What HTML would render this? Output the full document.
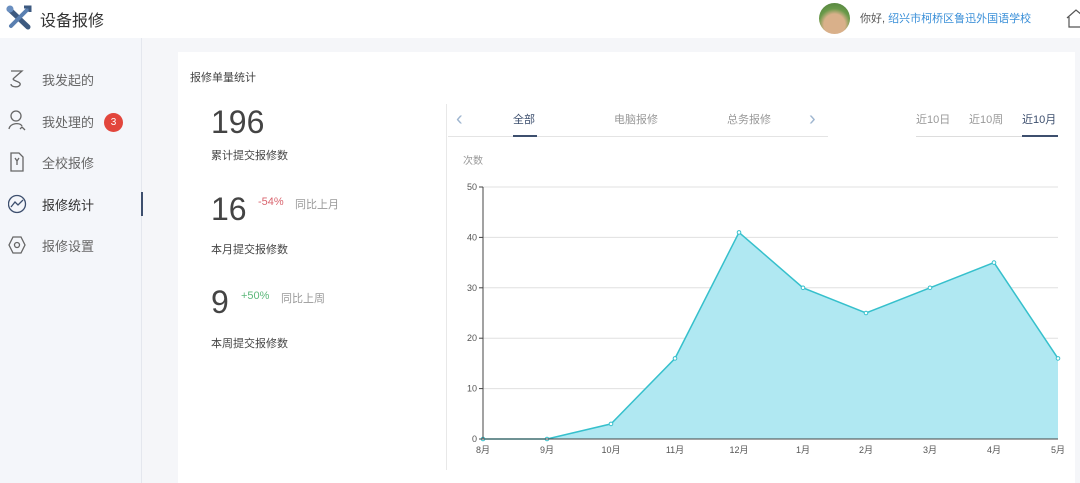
<!DOCTYPE html>
<html><head><meta charset="utf-8"><style>
*{margin:0;padding:0;box-sizing:border-box}
body{width:1080px;height:483px;overflow:hidden;background:#f5f6f9;font-family:"Liberation Sans","Noto Sans CJK SC",sans-serif;color:#333;position:relative}
.a{position:absolute;white-space:nowrap}
.top{left:0;top:0;width:1080px;height:38px;background:#fff}
.side{left:0;top:38px;width:142px;height:445px;background:#f4f6fa;border-right:1px solid #e4e7ee}
.nav{font-size:13px;color:#666}
.card{left:178px;top:52px;width:897px;height:431px;background:#fff}
</style></head><body>
<div class="a top"></div>
<svg class="a" style="left:6px;top:5px" width="28" height="26" viewBox="0 0 28 26"><path d="M3 4 L22 22" stroke="#3d5a80" stroke-width="5" stroke-linecap="round"/><path d="M22 4 L5 21" stroke="#5a7fb0" stroke-width="4" stroke-linecap="round"/><circle cx="4" cy="4" r="3.5" fill="#6a8fc0"/><path d="M18 2 l6 0 l0 5" stroke="#3d5a80" stroke-width="3" fill="none"/></svg>
<div class="a" style="left:40px;top:7px;font-size:16px;color:#333">设备报修</div>
<div class="a" style="left:819px;top:3px;width:31px;height:31px;border-radius:50%;background:radial-gradient(circle at 50% 70%,#d9b08a 40%,#6a9a4a 60%,#4a7a3a)"></div>
<div class="a" style="left:860px;top:10px;font-size:11px;color:#555">你好, <span style="color:#3a8fd8">绍兴市柯桥区鲁迅外国语学校</span></div>
<svg class="a" style="left:1066px;top:8px" width="16" height="20"><path d="M1 10 L10 2 L16 7 M3 9 V19 H16" stroke="#555" stroke-width="1.2" fill="none"/></svg>
<div class="a side"></div>
<div class="a" style="left:141px;top:192px;width:2px;height:24px;background:#3d4f6e"></div>
<svg class="a" style="left:8px;top:69px" width="20" height="200" fill="none" stroke="#666" stroke-width="1.3">
<path d="M3 2 H14 L6 9 C2 12 14 12 12 16 C10 19 3 18 3 15"/>
<circle cx="8" cy="47" r="5"/><path d="M1 60 C2 54 12 53 14 57 M12 60 l2 -2 l3 3"/>
<path d="M3 84 H11 L15 88 V102 H3 Z M7 89 l2 3 l2 -3 M9 92 v4"/>
<circle cx="9" cy="135" r="8.5" stroke="#3d4f6e"/><path d="M3 138 L7 133 L10 136 L15 131" stroke="#3d4f6e"/>
<path d="M5 168 L13 168 L17 176 L13 184 L5 184 L1 176 Z"/><circle cx="9" cy="176" r="2.5"/>
</svg>
<div class="a nav" style="left:42px;top:70px">我发起的</div>
<div class="a nav" style="left:42px;top:112px">我处理的</div>
<div class="a" style="left:104px;top:113px;width:19px;height:19px;border-radius:50%;background:#e2463c;color:#fff;font-size:10px;text-align:center;line-height:19px">3</div>
<div class="a nav" style="left:42px;top:153px">全校报修</div>
<div class="a nav" style="left:42px;top:195px;color:#333">报修统计</div>
<div class="a nav" style="left:42px;top:236px">报修设置</div>
<div class="a card"></div>
<div class="a" style="left:190px;top:69px;font-size:11px;color:#444">报修单量统计</div>
<div class="a" style="left:211px;top:104px;font-size:32px;color:#444">196</div>
<div class="a" style="left:211px;top:147px;font-size:11px;color:#444">累计提交报修数</div>
<div class="a" style="left:211px;top:191px;font-size:32px;color:#444">16</div>
<div class="a" style="left:258px;top:196px;font-size:11px;color:#d9646e">-54%</div>
<div class="a" style="left:295px;top:196px;font-size:11px;color:#999">同比上月</div>
<div class="a" style="left:211px;top:241px;font-size:11px;color:#444">本月提交报修数</div>
<div class="a" style="left:211px;top:284px;font-size:32px;color:#444">9</div>
<div class="a" style="left:241px;top:290px;font-size:11px;color:#5cb87a">+50%</div>
<div class="a" style="left:281px;top:290px;font-size:11px;color:#999">同比上周</div>
<div class="a" style="left:211px;top:335px;font-size:11px;color:#444">本周提交报修数</div>
<div class="a" style="left:446px;top:104px;width:1px;height:366px;background:#e8e8e8"></div>
<div class="a" style="left:448px;top:136px;width:380px;height:1px;background:#e4e4e4"></div>
<div class="a" style="left:456px;top:108px;font-size:20px;color:#9fb6d0">‹</div>
<div class="a" style="left:809px;top:108px;font-size:20px;color:#9fb6d0">›</div>
<div class="a" style="left:513px;top:111px;font-size:11px;color:#3d4f6e">全部</div>
<div class="a" style="left:513px;top:135px;width:24px;height:2px;background:#3d4f6e"></div>
<div class="a" style="left:614px;top:111px;font-size:11px;color:#999">电脑报修</div>
<div class="a" style="left:727px;top:111px;font-size:11px;color:#999">总务报修</div>
<div class="a" style="left:916px;top:111px;font-size:11px;color:#999">近10日</div>
<div class="a" style="left:969px;top:111px;font-size:11px;color:#999">近10周</div>
<div class="a" style="left:1022px;top:111px;font-size:11px;color:#3d4f6e">近10月</div>
<div class="a" style="left:916px;top:136px;width:142px;height:1px;background:#ddd"></div>
<div class="a" style="left:1022px;top:135px;width:36px;height:2px;background:#3d4f6e"></div>
<div class="a" style="left:463px;top:152px;font-size:10px;color:#999">次数</div>
<svg class="a" style="left:440px;top:175px" width="640" height="300" font-size="9" fill="#555" font-family="Liberation Sans,Noto Sans CJK SC,sans-serif">
<g stroke="#e0e0e0"><line x1="43" y1="12" x2="618" y2="12"/><line x1="43" y1="62.4" x2="618" y2="62.4"/><line x1="43" y1="112.8" x2="618" y2="112.8"/><line x1="43" y1="163.2" x2="618" y2="163.2"/><line x1="43" y1="213.6" x2="618" y2="213.6"/></g>
<path d="M43 264 L107 264 L171 248.9 L235 183.4 L299 57.4 L363 112.8 L426 138 L490 112.8 L554 87.6 L618 183.4 L618 264 Z" fill="#b0e8f2"/>
<path d="M43 264 L107 264 L171 248.9 L235 183.4 L299 57.4 L363 112.8 L426 138 L490 112.8 L554 87.6 L618 183.4" fill="none" stroke="#36c0cc" stroke-width="1.5"/>
<g fill="#fff" stroke="#36c0cc"><circle cx="43" cy="264" r="1.8"/><circle cx="107" cy="264" r="1.8"/><circle cx="171" cy="248.9" r="1.8"/><circle cx="235" cy="183.4" r="1.8"/><circle cx="299" cy="57.4" r="1.8"/><circle cx="363" cy="112.8" r="1.8"/><circle cx="426" cy="138" r="1.8"/><circle cx="490" cy="112.8" r="1.8"/><circle cx="554" cy="87.6" r="1.8"/><circle cx="618" cy="183.4" r="1.8"/></g>
<g stroke="#444"><line x1="43" y1="12" x2="43" y2="264"/><line x1="43" y1="264" x2="618" y2="264"/>
<line x1="39" y1="12" x2="43" y2="12"/><line x1="39" y1="62.4" x2="43" y2="62.4"/><line x1="39" y1="112.8" x2="43" y2="112.8"/><line x1="39" y1="163.2" x2="43" y2="163.2"/><line x1="39" y1="213.6" x2="43" y2="213.6"/><line x1="39" y1="264" x2="43" y2="264"/></g>
<g text-anchor="end"><text x="37" y="15">50</text><text x="37" y="65.4">40</text><text x="37" y="115.8">30</text><text x="37" y="166.2">20</text><text x="37" y="216.6">10</text><text x="37" y="267">0</text></g>
<g text-anchor="middle"><text x="43" y="278">8月</text><text x="107" y="278">9月</text><text x="171" y="278">10月</text><text x="235" y="278">11月</text><text x="299" y="278">12月</text><text x="363" y="278">1月</text><text x="426" y="278">2月</text><text x="490" y="278">3月</text><text x="554" y="278">4月</text><text x="618" y="278">5月</text></g>
</svg>
</body></html>
